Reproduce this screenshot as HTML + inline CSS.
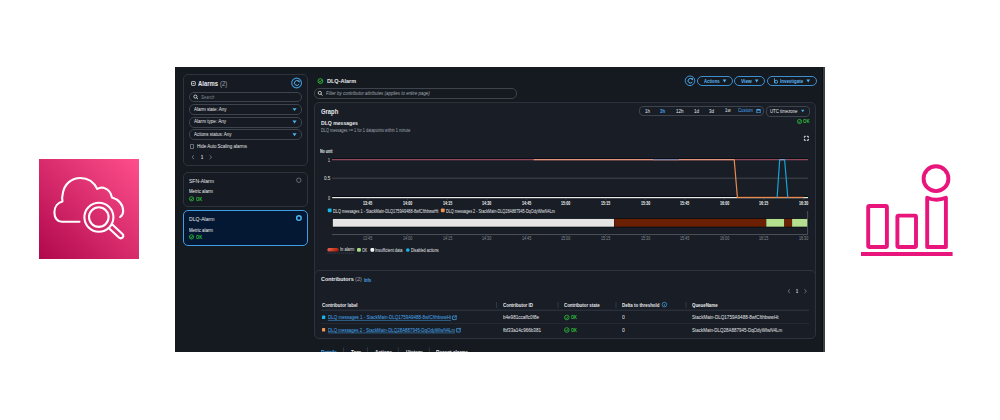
<!DOCTYPE html>
<html><head><meta charset="utf-8"><style>
html,body{margin:0;padding:0;width:1000px;height:420px;overflow:hidden;background:#fff;font-family:'Liberation Sans', sans-serif;}
.t{position:absolute;white-space:nowrap;line-height:10px;height:10px;transform-origin:0 0;}
.a{position:absolute;box-sizing:border-box;}
svg{position:absolute;overflow:visible;}
</style></head><body>
<!-- left AWS icon -->
<div class="a" style="left:39px;top:159px;width:100px;height:100px;background:linear-gradient(45deg,#B0084D 0%,#FF4F8B 100%);"></div>
<svg style="left:0;top:0" width="1000" height="420" viewBox="0 0 1000 420">
  <g fill="none" stroke="#fff" stroke-width="2.1" stroke-linecap="round" stroke-linejoin="round">
    <path d="M79.5,221.8 L62,221.8 C57.5,221.8 54.4,218 54.4,212.5 C54.4,206.5 58,202.5 62.5,201.5 C62,199.5 62,197 62.6,194.5 C64,183.5 72,178 80.5,178 C88,178 94,182.5 97.3,189 C99,187.8 101.3,187.3 103.5,187.8 C108,189 111,192.5 112,197.5 C118.5,199.3 123.2,204.5 123.2,211 C123.2,213.5 122.2,215.5 120.2,217"/>
    <circle cx="98.9" cy="217.2" r="14.5"/>
    <circle cx="98.8" cy="217.1" r="9.8"/>
    <path d="M109.2,228.4 L118.9,237.6 C120,238.6 121.6,238.6 122.6,237.5 C123.6,236.4 123.5,234.9 122.5,234 L112.6,224.8"/>
  </g>
</svg>
<!-- right pink icon -->
<svg style="left:0;top:0" width="1000" height="420" viewBox="0 0 1000 420">
  <g fill="none" stroke="#E8157C" stroke-width="3.9" stroke-linejoin="round">
    <rect x="868.2" y="206" width="18.7" height="41" rx="1.2"/>
    <rect x="897.4" y="215.6" width="18.6" height="31.4" rx="1.2"/>
    <path d="M927.2,247 L927.2,197.8 Q936.6,201.8 945.9,197.8 L945.9,247 Z"/>
    <circle cx="936" cy="178.7" r="12.4"/>
    <line x1="861" y1="254" x2="952.6" y2="254" stroke-width="4"/>
  </g>
</svg>

<!-- screenshot container -->
<div class="a" style="left:175px;top:67px;width:650px;height:285px;background:#151a21;"></div>
<div class="a" style="left:821.5px;top:67px;width:1.5px;height:285px;background:#0b1017;"></div>
<div class="a" style="left:823px;top:67px;width:2px;height:285px;background:#3c3f43;"></div>

<!-- left filter panel -->
<div class="a" style="left:183px;top:74px;width:125px;height:92px;border:1px solid #2e343e;border-radius:5px;background:#161b23;"></div>
<svg style="left:0;top:0" width="1000" height="420">
  <rect x="191.5" y="81.6" width="3.8" height="3.8" rx="0.6" fill="none" stroke="#e6e8eb" stroke-width="0.8"/>
  <line x1="192.5" y1="83.5" x2="194.3" y2="83.5" stroke="#e6e8eb" stroke-width="0.7"/>
  <circle cx="296.6" cy="83" r="4.9" fill="none" stroke="#3d97d9" stroke-width="1.1"/>
  <path d="M298.5,81.3 A2.4,2.4 0 1 0 298.9,84.2" fill="none" stroke="#5ab8f5" stroke-width="1"/>
  <path d="M297.3,80.4 L299.6,80.4 L299.6,82.7 Z" fill="#5ab8f5"/>
  <circle cx="195.4" cy="96.6" r="1.6" fill="none" stroke="#e6e8eb" stroke-width="0.8"/>
  <line x1="196.6" y1="97.8" x2="198" y2="99.2" stroke="#e6e8eb" stroke-width="0.8"/>
  <g fill="#48b4f5">
    <path d="M292.5,108.2 L296.6,108.2 L294.55,111.1 Z"/>
    <path d="M292.5,120.5 L296.6,120.5 L294.55,123.4 Z"/>
    <path d="M292.5,133.3 L296.6,133.3 L294.55,136.2 Z"/>
  </g>
  <g fill="none" stroke="#8a9099" stroke-width="0.7">
    <path d="M194,155.3 L192,157.2 L194,159.1"/>
    <path d="M209.6,155.3 L211.6,157.2 L209.6,159.1"/>
  </g>
</svg>
<div class="a" style="left:189px;top:91.8px;width:113px;height:10.6px;border:1px solid #3e444d;border-radius:5px;"></div>
<div class="a" style="left:189px;top:104px;width:113px;height:11px;border:1px solid #3e444d;border-radius:5px;"></div>
<div class="a" style="left:189px;top:116.5px;width:113px;height:11px;border:1px solid #3e444d;border-radius:5px;"></div>
<div class="a" style="left:189px;top:129px;width:113px;height:11.2px;border:1px solid #3e444d;border-radius:5px;"></div>
<div class="a" style="left:189.6px;top:144.4px;width:4.8px;height:4.8px;border:0.8px solid #6b7078;border-radius:0.8px;"></div>

<!-- SFN card -->
<div class="a" style="left:183px;top:172px;width:125px;height:35px;border:1px solid #2e343e;border-radius:5px;background:#161b23;"></div>
<!-- DLQ card selected -->
<div class="a" style="left:183px;top:209.8px;width:125px;height:36px;border:1.3px solid #3f9fe2;border-radius:5px;background:#051833;"></div>
<svg style="left:0;top:0" width="1000" height="420">
  <circle cx="298.8" cy="180.2" r="2.2" fill="none" stroke="#7a8089" stroke-width="0.8"/>
  <circle cx="298.9" cy="218.1" r="2.3" fill="#051833" stroke="#4dbaf7" stroke-width="1.4"/>
  <g fill="none" stroke="#2fbf3a" stroke-width="0.8">
    <circle cx="191.5" cy="198.8" r="2.1"/>
    <path d="M190.4,198.9 L191.3,199.8 L192.6,197.9"/>
    <circle cx="191.5" cy="236.9" r="2.1"/>
    <path d="M190.4,237 L191.3,237.9 L192.6,236"/>
  </g>
</svg>

<!-- main header -->
<svg style="left:0;top:0" width="1000" height="420">
  <g fill="none" stroke="#2fbf3a" stroke-width="0.9">
    <circle cx="320.4" cy="81.1" r="2.4"/>
    <path d="M319.2,81.2 L320.2,82.2 L321.6,80.1"/>
  </g>
  <circle cx="690" cy="80.8" r="4.8" fill="none" stroke="#3d97d9" stroke-width="1"/>
  <path d="M691.9,79.1 A2.3,2.3 0 1 0 692.3,82" fill="none" stroke="#5ab8f5" stroke-width="1"/>
  <path d="M690.7,78.2 L693,78.2 L693,80.5 Z" fill="#5ab8f5"/>
  <g fill="#48b4f5">
    <path d="M722.7,79.6 L726.4,79.6 L724.55,82.4 Z"/>
    <path d="M754.9,79.6 L758.5,79.6 L756.7,82.4 Z"/>
    <path d="M806.4,79.6 L810,79.6 L808.2,82.4 Z"/>
  </g>
  <g fill="none" stroke="#5ab8f5" stroke-width="0.8">
    <circle cx="776.2" cy="81.8" r="1.5"/>
    <line x1="774.5" y1="78.3" x2="774.5" y2="83.2"/>
  </g>
  <circle cx="319.8" cy="92.9" r="1.6" fill="none" stroke="#e6e8eb" stroke-width="0.8"/>
  <line x1="321" y1="94.1" x2="322.5" y2="95.6" stroke="#e6e8eb" stroke-width="0.8"/>
</svg>
<div class="a" style="left:697px;top:75.5px;width:36px;height:10.6px;border:1px solid #3d8fcf;border-radius:6px;"></div>
<div class="a" style="left:734.3px;top:75.5px;width:30.4px;height:10.6px;border:1px solid #3d8fcf;border-radius:6px;"></div>
<div class="a" style="left:767px;top:75.5px;width:50px;height:10.6px;border:1px solid #3d8fcf;border-radius:6px;"></div>
<div class="a" style="left:314px;top:88px;width:203px;height:10.8px;border:1px solid #3e444d;border-radius:5px;"></div>

<!-- graph panel -->
<div class="a" style="left:314px;top:101.5px;width:502px;height:176px;border:1px solid #2c323c;border-radius:5px;background:#181d26;"></div>
<div class="a" style="left:639px;top:106px;width:124.6px;height:10px;border:1px solid #3e444d;border-radius:4px;"></div>
<div class="a" style="left:765.5px;top:106px;width:44.2px;height:10.5px;border:1px solid #3e444d;border-radius:4px;"></div>
<svg style="left:0;top:0" width="1000" height="420">
  <rect x="756.4" y="108.9" width="4.2" height="4.2" fill="#48a9ef" rx="0.5"/>
  <rect x="757.1" y="110.5" width="2.8" height="1.9" fill="#1a2230"/>
  <path d="M801.1,109.8 L804.4,109.8 L802.75,112.2 Z" fill="#48b4f5"/>
  <g fill="none" stroke="#2fbf3a" stroke-width="0.8">
    <circle cx="799.5" cy="121.5" r="2.1"/>
    <path d="M798.4,121.6 L799.3,122.5 L800.6,120.6"/>
  </g>
  <g fill="none" stroke="#e6e8eb" stroke-width="1">
    <path d="M804.4,137.7 L804.4,136.3 L805.8,136.3"/>
    <path d="M806.9,136.3 L808.3,136.3 L808.3,137.7"/>
    <path d="M804.4,138.9 L804.4,140.3 L805.8,140.3"/>
    <path d="M806.9,140.3 L808.3,140.3 L808.3,138.9"/>
  </g>
  <!-- chart -->
  <line x1="332" y1="178.2" x2="808" y2="178.2" stroke="#4d5259" stroke-width="0.8"/>
  <line x1="332" y1="158.6" x2="808" y2="158.6" stroke="#060c12" stroke-width="0.9"/>
  <line x1="332" y1="159.6" x2="808" y2="159.6" stroke="#94495a" stroke-width="1.2"/>
  <line x1="533.8" y1="159.6" x2="734.3" y2="159.6" stroke="#e6937d" stroke-width="1.2"/>
  <line x1="653" y1="159.6" x2="679" y2="159.6" stroke="#7f81a0" stroke-width="1.2"/>
  <line x1="332" y1="196.4" x2="808" y2="196.4" stroke="#060c12" stroke-width="1"/>
  <line x1="332" y1="198.7" x2="808" y2="198.7" stroke="#0a1016" stroke-width="0.8"/>
  <line x1="332.2" y1="197.6" x2="808" y2="197.6" stroke="#e6e6e6" stroke-width="1.3"/>
  <polyline points="734.2,159.6 737.4,197.4 803.5,197.4" fill="none" stroke="#e9894f" stroke-width="1.2"/>
  <polyline points="777.1,197.5 779.7,159.6 784.6,159.6 787.8,197.5" fill="none" stroke="#14a6d8" stroke-width="1.2"/>
  <line x1="779.9" y1="159.6" x2="784.4" y2="159.6" stroke="#8f95c0" stroke-width="1.2"/>
  <!-- legend squares -->
  <rect x="327.8" y="208.4" width="3.8" height="3.8" rx="0.9" fill="#17b5e8"/>
  <rect x="440.9" y="208.4" width="3.8" height="3.8" rx="0.9" fill="#f0934e"/>
  <!-- status bar -->
  <rect x="332.2" y="218.2" width="476.3" height="9.2" fill="#070b11"/>
  <rect x="332.8" y="218.9" width="281.2" height="7.8" fill="#e4e4e4"/>
  <rect x="614.3" y="218.9" width="152" height="7.8" fill="#6b1f03"/>
  <rect x="766.3" y="218.9" width="18" height="7.8" fill="#b3df8e"/>
  <rect x="784.3" y="218.9" width="7.8" height="7.8" fill="#6b1f03"/>
  <rect x="792.1" y="218.9" width="15.8" height="7.8" fill="#b3df8e"/>
  <line x1="332" y1="234.5" x2="808" y2="234.5" stroke="#50555c" stroke-width="0.9"/>
  <line x1="807.6" y1="211" x2="807.6" y2="234.5" stroke="#50555c" stroke-width="0.9"/>
  <g stroke="#50555c" stroke-width="0.7"><line x1="368.00" y1="198.2" x2="368.00" y2="199.8"/><line x1="368.00" y1="234.5" x2="368.00" y2="236"/><line x1="407.59" y1="198.2" x2="407.59" y2="199.8"/><line x1="407.59" y1="234.5" x2="407.59" y2="236"/><line x1="447.18" y1="198.2" x2="447.18" y2="199.8"/><line x1="447.18" y1="234.5" x2="447.18" y2="236"/><line x1="486.77" y1="198.2" x2="486.77" y2="199.8"/><line x1="486.77" y1="234.5" x2="486.77" y2="236"/><line x1="526.36" y1="198.2" x2="526.36" y2="199.8"/><line x1="526.36" y1="234.5" x2="526.36" y2="236"/><line x1="565.95" y1="198.2" x2="565.95" y2="199.8"/><line x1="565.95" y1="234.5" x2="565.95" y2="236"/><line x1="605.54" y1="198.2" x2="605.54" y2="199.8"/><line x1="605.54" y1="234.5" x2="605.54" y2="236"/><line x1="645.13" y1="198.2" x2="645.13" y2="199.8"/><line x1="645.13" y1="234.5" x2="645.13" y2="236"/><line x1="684.72" y1="198.2" x2="684.72" y2="199.8"/><line x1="684.72" y1="234.5" x2="684.72" y2="236"/><line x1="724.31" y1="198.2" x2="724.31" y2="199.8"/><line x1="724.31" y1="234.5" x2="724.31" y2="236"/><line x1="763.90" y1="198.2" x2="763.90" y2="199.8"/><line x1="763.90" y1="234.5" x2="763.90" y2="236"/><line x1="803.49" y1="198.2" x2="803.49" y2="199.8"/><line x1="803.49" y1="234.5" x2="803.49" y2="236"/></g>
  <!-- legend row -->
  <defs><linearGradient id="rg" x1="0" y1="0" x2="1" y2="0.3"><stop offset="0" stop-color="#f26a50"/><stop offset="1" stop-color="#a91f0b"/></linearGradient></defs>
  <rect x="327.4" y="248.1" width="11.4" height="3.5" rx="1.6" fill="url(#rg)"/>
  <line x1="327.5" y1="253.1" x2="353.8" y2="253.1" stroke="#7a8088" stroke-width="0.6" stroke-dasharray="0.7,1.3"/>
  <rect x="357" y="248.1" width="3.9" height="3.7" rx="1.2" fill="#a6dd84"/>
  <rect x="370.5" y="248.1" width="3.7" height="3.7" rx="1.1" fill="#f4f4f4"/>
  <circle cx="407.8" cy="250" r="1.85" fill="#19b3ea"/>
</svg>

<!-- contributors panel -->
<div class="a" style="left:314px;top:270px;width:502px;height:68.8px;border:1px solid #2e343e;border-radius:5px;background:#181d26;"></div>
<svg style="left:0;top:0" width="1000" height="420">
  <g fill="none" stroke="#8a9099" stroke-width="0.7">
    <path d="M790,289.3 L788,291.2 L790,293.1"/>
    <path d="M804.4,289.3 L806.4,291.2 L804.4,293.1"/>
  </g>
  <g stroke="#3a4049" stroke-width="0.8">
    <line x1="496.6" y1="302" x2="496.6" y2="308"/>
    <line x1="558" y1="302" x2="558" y2="308"/>
    <line x1="616" y1="302" x2="616" y2="308"/>
    <line x1="686" y1="302" x2="686" y2="308"/>
  </g>
  <line x1="321" y1="310.2" x2="809" y2="310.2" stroke="#363c46" stroke-width="0.9"/>
  <line x1="321" y1="323.5" x2="809" y2="323.5" stroke="#2a3039" stroke-width="0.7"/>
  <circle cx="664.4" cy="304.6" r="2.3" fill="none" stroke="#48a9ef" stroke-width="0.7"/>
  <line x1="664.4" y1="304" x2="664.4" y2="306" stroke="#48a9ef" stroke-width="0.6"/>
  <rect x="322" y="315.5" width="3.2" height="3.6" rx="0.7" fill="#17b5e8"/>
  <rect x="322" y="328" width="3.2" height="3.6" rx="0.7" fill="#f0934e"/>
  <line x1="327.8" y1="320.4" x2="451" y2="320.4" stroke="#48a9ef" stroke-width="0.5"/>
  <line x1="327.8" y1="332.9" x2="455" y2="332.9" stroke="#48a9ef" stroke-width="0.5"/>
  <g fill="none" stroke="#48a9ef" stroke-width="0.7">
    <path d="M454.8,316 L452.6,316 L452.6,319.6 L456.2,319.6 L456.2,317.4"/>
    <path d="M454.4,317.8 L456.4,315.8 M455,315.8 L456.4,315.8 L456.4,317.2"/>
    <path d="M458.8,328.5 L456.6,328.5 L456.6,332.1 L460.2,332.1 L460.2,329.9"/>
    <path d="M458.4,330.3 L460.4,328.3 M459,328.3 L460.4,328.3 L460.4,329.7"/>
  </g>
  <g fill="none" stroke="#2fbf3a" stroke-width="0.8">
    <circle cx="566.8" cy="317.5" r="2.3"/>
    <path d="M565.6,317.6 L566.6,318.6 L568,316.6"/>
    <circle cx="566.8" cy="330" r="2.3"/>
    <path d="M565.6,330.1 L566.6,331.1 L568,329.1"/>
  </g>
  <g stroke="#3a4049" stroke-width="0.8">
    <line x1="343.6" y1="347.4" x2="343.6" y2="352"/>
    <line x1="367.4" y1="347.4" x2="367.4" y2="352"/>
    <line x1="398.3" y1="347.4" x2="398.3" y2="352"/>
    <line x1="429.3" y1="347.4" x2="429.3" y2="352"/>
  </g>
</svg>
<!-- white cover below screenshot bottom -->
<div class="a" style="left:175px;top:352px;width:650px;height:20px;background:#fff;z-index:5;"></div>

<div class="t" style="left:198.00px;top:79.34px;font-size:6.30px;font-weight:700;color:#e6e8eb;;transform:scale(0.9364,1.0000);">Alarms</div>
<div class="t" style="left:219.90px;top:78.94px;font-size:6.30px;font-weight:400;color:#a3a9b1;;transform:scale(0.9217,1.0000);">(2)</div>
<div class="t" style="left:201.30px;top:93.20px;font-size:4.50px;font-weight:400;color:#7d848c;font-style:italic;transform:scale(0.9393,1.0000);">Search</div>
<div class="t" style="left:193.90px;top:104.62px;font-size:4.60px;font-weight:400;color:#e6e8eb;;transform:scale(0.9715,1.0000);">Alarm state: Any</div>
<div class="t" style="left:193.90px;top:116.84px;font-size:4.60px;font-weight:400;color:#e6e8eb;;transform:scale(0.9978,1.0000);">Alarm type: Any</div>
<div class="t" style="left:193.90px;top:129.96px;font-size:4.60px;font-weight:400;color:#e6e8eb;;transform:scale(0.9662,1.0000);">Actions status: Any</div>
<div class="t" style="left:197.00px;top:142.18px;font-size:4.50px;font-weight:400;color:#e6e8eb;;transform:scale(0.9924,1.0000);">Hide Auto Scaling alarms</div>
<div class="t" style="left:200.90px;top:153.48px;font-size:4.60px;font-weight:700;color:#e6e8eb;;transform:scale(0.8195,1.0000);">1</div>
<div class="t" style="left:189.10px;top:175.88px;font-size:5.40px;font-weight:400;color:#e6e8eb;;transform:scale(0.9341,1.0000);">SFN-Alarm</div>
<div class="t" style="left:189.10px;top:186.96px;font-size:4.60px;font-weight:400;color:#f2f3f5;;transform:scale(0.9454,1.0000);">Metric alarm</div>
<div class="t" style="left:195.80px;top:195.24px;font-size:4.60px;font-weight:700;color:#2fbf3a;;transform:scale(0.8853,1.0000);">OK</div>
<div class="t" style="left:189.10px;top:214.22px;font-size:5.40px;font-weight:400;color:#e6e8eb;;transform:scale(0.9418,1.0000);">DLQ-Alarm</div>
<div class="t" style="left:189.10px;top:225.96px;font-size:4.60px;font-weight:400;color:#f2f3f5;;transform:scale(0.9454,1.0000);">Metric alarm</div>
<div class="t" style="left:195.80px;top:233.24px;font-size:4.60px;font-weight:700;color:#2fbf3a;;transform:scale(0.8853,1.0000);">OK</div>
<div class="t" style="left:326.70px;top:76.34px;font-size:6.00px;font-weight:700;color:#e6e8eb;;transform:scale(0.9188,1.0000);">DLQ-Alarm</div>
<div class="t" style="left:704.00px;top:76.50px;font-size:4.60px;font-weight:700;color:#5ab6f6;;transform:scale(0.9253,1.0000);">Actions</div>
<div class="t" style="left:741.10px;top:76.50px;font-size:4.60px;font-weight:700;color:#5ab6f6;;transform:scale(1.0394,1.0000);">View</div>
<div class="t" style="left:780.00px;top:76.50px;font-size:4.60px;font-weight:700;color:#5ab6f6;;transform:scale(0.9625,1.0000);">Investigate</div>
<div class="t" style="left:326.00px;top:89.40px;font-size:4.50px;font-weight:400;color:#a3a9b1;font-style:italic;transform:scale(0.9833,1.0000);">Filter by contributor attributes (applies to entire page)</div>
<div class="t" style="left:321.00px;top:106.66px;font-size:7.00px;font-weight:700;color:#e6e8eb;;transform:scale(0.8388,1.0000);">Graph</div>
<div class="t" style="left:644.90px;top:106.66px;font-size:4.50px;font-weight:400;color:#e6e8eb;;transform:scale(0.9969,1.0000);">1h</div>
<div class="t" style="left:660.20px;top:106.66px;font-size:4.50px;font-weight:700;color:#48a9ef;;transform:scale(0.9496,1.0000);">3h</div>
<div class="t" style="left:676.00px;top:106.66px;font-size:4.50px;font-weight:400;color:#e6e8eb;;transform:scale(1.0112,1.0000);">12h</div>
<div class="t" style="left:694.00px;top:106.66px;font-size:4.50px;font-weight:400;color:#e6e8eb;;transform:scale(0.9969,1.0000);">1d</div>
<div class="t" style="left:709.30px;top:106.66px;font-size:4.50px;font-weight:400;color:#e6e8eb;;transform:scale(0.9969,1.0000);">3d</div>
<div class="t" style="left:724.90px;top:106.46px;font-size:4.50px;font-weight:400;color:#e6e8eb;;transform:scale(0.9539,1.0000);">1w</div>
<div class="t" style="left:738.10px;top:106.46px;font-size:4.50px;font-weight:400;color:#48a9ef;;transform:scale(0.9603,1.0000);">Custom</div>
<div class="t" style="left:770.00px;top:107.14px;font-size:4.80px;font-weight:400;color:#e6e8eb;;transform:scale(0.8970,1.0000);">UTC timezone</div>
<div class="t" style="left:803.00px;top:117.24px;font-size:4.50px;font-weight:700;color:#2fbf3a;;transform:scale(0.9778,1.0000);">OK</div>
<div class="t" style="left:321.00px;top:118.22px;font-size:6.20px;font-weight:700;color:#e6e8eb;;transform:scale(0.8252,1.0000);">DLQ messages</div>
<div class="t" style="left:321.00px;top:125.62px;font-size:4.50px;font-weight:400;color:#a3a9b1;;transform:scale(0.8539,1.0000);">DLQ messages &gt;= 1 for 1 datapoints within 1 minute</div>
<div class="t" style="left:320.40px;top:147.26px;font-size:4.50px;font-weight:700;color:#e6e8eb;;transform:scale(0.8065,1.0000);">No unit</div>
<div class="t" style="left:328.00px;top:155.70px;font-size:4.50px;font-weight:400;color:#e6e8eb;;transform:scale(0.7553,1.0000);">1</div>
<div class="t" style="left:323.70px;top:174.02px;font-size:4.50px;font-weight:400;color:#e6e8eb;;transform:scale(1.0055,1.0000);">0.5</div>
<div class="t" style="left:328.00px;top:193.70px;font-size:4.50px;font-weight:400;color:#e6e8eb;;transform:scale(0.7950,1.0000);">0</div>
<div class="t" style="left:363.40px;top:199.36px;font-size:4.50px;font-weight:700;color:#f4f5f6;;transform:scale(0.7989,1.0000);">13:45</div>
<div class="t" style="left:363.40px;top:234.36px;font-size:4.50px;font-weight:400;color:#8c9198;;transform:scale(0.8166,1.0000);">13:45</div>
<div class="t" style="left:402.99px;top:199.36px;font-size:4.50px;font-weight:700;color:#f4f5f6;;transform:scale(0.7989,1.0000);">14:00</div>
<div class="t" style="left:402.99px;top:234.36px;font-size:4.50px;font-weight:400;color:#8c9198;;transform:scale(0.8166,1.0000);">14:00</div>
<div class="t" style="left:442.58px;top:199.36px;font-size:4.50px;font-weight:700;color:#f4f5f6;;transform:scale(0.7989,1.0000);">14:15</div>
<div class="t" style="left:442.58px;top:234.36px;font-size:4.50px;font-weight:400;color:#8c9198;;transform:scale(0.8166,1.0000);">14:15</div>
<div class="t" style="left:482.17px;top:199.36px;font-size:4.50px;font-weight:700;color:#f4f5f6;;transform:scale(0.7989,1.0000);">14:30</div>
<div class="t" style="left:482.17px;top:234.36px;font-size:4.50px;font-weight:400;color:#8c9198;;transform:scale(0.8166,1.0000);">14:30</div>
<div class="t" style="left:521.76px;top:199.36px;font-size:4.50px;font-weight:700;color:#f4f5f6;;transform:scale(0.7989,1.0000);">14:45</div>
<div class="t" style="left:521.76px;top:234.36px;font-size:4.50px;font-weight:400;color:#8c9198;;transform:scale(0.8166,1.0000);">14:45</div>
<div class="t" style="left:561.35px;top:199.36px;font-size:4.50px;font-weight:700;color:#f4f5f6;;transform:scale(0.7989,1.0000);">15:00</div>
<div class="t" style="left:561.35px;top:234.36px;font-size:4.50px;font-weight:400;color:#8c9198;;transform:scale(0.8166,1.0000);">15:00</div>
<div class="t" style="left:600.94px;top:199.36px;font-size:4.50px;font-weight:700;color:#f4f5f6;;transform:scale(0.7989,1.0000);">15:15</div>
<div class="t" style="left:600.94px;top:234.36px;font-size:4.50px;font-weight:400;color:#8c9198;;transform:scale(0.8166,1.0000);">15:15</div>
<div class="t" style="left:640.53px;top:199.36px;font-size:4.50px;font-weight:700;color:#f4f5f6;;transform:scale(0.7989,1.0000);">15:30</div>
<div class="t" style="left:640.53px;top:234.36px;font-size:4.50px;font-weight:400;color:#8c9198;;transform:scale(0.8166,1.0000);">15:30</div>
<div class="t" style="left:680.12px;top:199.36px;font-size:4.50px;font-weight:700;color:#f4f5f6;;transform:scale(0.7989,1.0000);">15:45</div>
<div class="t" style="left:680.12px;top:234.36px;font-size:4.50px;font-weight:400;color:#8c9198;;transform:scale(0.8166,1.0000);">15:45</div>
<div class="t" style="left:719.71px;top:199.36px;font-size:4.50px;font-weight:700;color:#f4f5f6;;transform:scale(0.7989,1.0000);">16:00</div>
<div class="t" style="left:719.71px;top:234.36px;font-size:4.50px;font-weight:400;color:#8c9198;;transform:scale(0.8166,1.0000);">16:00</div>
<div class="t" style="left:759.30px;top:199.36px;font-size:4.50px;font-weight:700;color:#f4f5f6;;transform:scale(0.7989,1.0000);">16:15</div>
<div class="t" style="left:759.30px;top:234.36px;font-size:4.50px;font-weight:400;color:#8c9198;;transform:scale(0.8166,1.0000);">16:15</div>
<div class="t" style="left:798.89px;top:199.36px;font-size:4.50px;font-weight:700;color:#f4f5f6;;transform:scale(0.7989,1.0000);">16:30</div>
<div class="t" style="left:798.89px;top:234.36px;font-size:4.50px;font-weight:400;color:#8c9198;;transform:scale(0.8166,1.0000);">16:30</div>
<div class="t" style="left:333.00px;top:206.70px;font-size:4.50px;font-weight:400;color:#e6e8eb;;transform:scale(0.8513,1.0000);">DLQ messages 1 - StackMain-DLQ1759A9488-8wfCfthbwwHt</div>
<div class="t" style="left:446.00px;top:206.70px;font-size:4.50px;font-weight:400;color:#e6e8eb;;transform:scale(0.8405,1.0000);">DLQ messages 2 - StackMain-DLQ28A887945-DqOdyWlwN4Lm</div>
<div class="t" style="left:339.90px;top:245.48px;font-size:4.50px;font-weight:400;color:#e6e8eb;;transform:scale(0.8853,1.0000);">In alarm</div>
<div class="t" style="left:362.20px;top:246.48px;font-size:4.50px;font-weight:400;color:#e6e8eb;;transform:scale(0.7981,1.0000);">OK</div>
<div class="t" style="left:375.30px;top:246.08px;font-size:4.50px;font-weight:400;color:#e6e8eb;;transform:scale(0.8743,1.0000);">Insufficient data</div>
<div class="t" style="left:411.20px;top:245.88px;font-size:4.50px;font-weight:400;color:#e6e8eb;;transform:scale(0.8386,1.0000);">Disabled actions</div>
<div class="t" style="left:321.10px;top:274.16px;font-size:5.90px;font-weight:700;color:#e6e8eb;;transform:scale(0.9167,1.0000);">Contributors</div>
<div class="t" style="left:355.20px;top:274.16px;font-size:5.90px;font-weight:400;color:#a3a9b1;;transform:scale(0.9579,1.0000);">(2)</div>
<div class="t" style="left:364.30px;top:275.66px;font-size:4.60px;font-weight:700;color:#48a9ef;;transform:scale(0.8549,1.0000);">Info</div>
<div class="t" style="left:796.00px;top:287.48px;font-size:4.60px;font-weight:700;color:#e6e8eb;;transform:scale(0.7805,1.0000);">1</div>
<div class="t" style="left:321.60px;top:299.94px;font-size:5.00px;font-weight:700;color:#e6e8eb;;transform:scale(0.8838,1.0000);">Contributor label</div>
<div class="t" style="left:503.00px;top:300.34px;font-size:5.00px;font-weight:700;color:#e6e8eb;;transform:scale(0.8852,1.0000);">Contributor ID</div>
<div class="t" style="left:564.40px;top:299.94px;font-size:5.00px;font-weight:700;color:#e6e8eb;;transform:scale(0.8777,1.0000);">Contributor state</div>
<div class="t" style="left:622.00px;top:299.72px;font-size:5.00px;font-weight:700;color:#e6e8eb;;transform:scale(0.8820,1.0000);">Delta to threshold</div>
<div class="t" style="left:691.80px;top:299.94px;font-size:5.00px;font-weight:700;color:#e6e8eb;;transform:scale(0.8771,1.0000);">QueueName</div>
<div class="t" style="left:327.80px;top:312.00px;font-size:5.20px;font-weight:400;color:#48a9ef;;transform:scale(0.8632,1.0000);">DLQ messages 1 - StackMain-DLQ1759A9488-8wfCfthbwwHt</div>
<div class="t" style="left:327.80px;top:325.12px;font-size:5.20px;font-weight:400;color:#48a9ef;;transform:scale(0.8517,1.0000);">DLQ messages 2 - StackMain-DLQ28A887945-DqOdyWlwN4Lm</div>
<div class="t" style="left:503.00px;top:311.66px;font-size:5.20px;font-weight:400;color:#e6e8eb;;transform:scale(0.8807,1.0000);">b4e981ccaffc0f8e</div>
<div class="t" style="left:503.00px;top:324.78px;font-size:5.20px;font-weight:400;color:#e6e8eb;;transform:scale(0.8840,1.0000);">fbf33a14c966b381</div>
<div class="t" style="left:571.00px;top:311.66px;font-size:5.20px;font-weight:700;color:#2fbf3a;;transform:scale(0.7711,1.0000);">OK</div>
<div class="t" style="left:571.00px;top:324.78px;font-size:5.20px;font-weight:700;color:#2fbf3a;;transform:scale(0.7711,1.0000);">OK</div>
<div class="t" style="left:622.40px;top:311.66px;font-size:5.20px;font-weight:400;color:#e6e8eb;;transform:scale(0.9686,1.0000);">0</div>
<div class="t" style="left:622.40px;top:324.78px;font-size:5.20px;font-weight:400;color:#e6e8eb;;transform:scale(0.9686,1.0000);">0</div>
<div class="t" style="left:691.80px;top:311.66px;font-size:5.20px;font-weight:400;color:#e6e8eb;;transform:scale(0.8824,1.0000);">StackMain-DLQ1759A9488-8wfCfthbwwHt</div>
<div class="t" style="left:691.80px;top:324.78px;font-size:5.20px;font-weight:400;color:#e6e8eb;;transform:scale(0.8617,1.0000);">StackMain-DLQ28A887945-DqOdyWlwN4Lm</div>
<div class="t" style="left:321.00px;top:347.12px;font-size:5.00px;font-weight:700;color:#48a9ef;;transform:scale(0.9813,1.0000);">Details</div>
<div class="t" style="left:350.70px;top:347.12px;font-size:5.00px;font-weight:700;color:#e6e8eb;;transform:scale(0.9105,1.0000);">Tags</div>
<div class="t" style="left:374.50px;top:346.72px;font-size:5.00px;font-weight:700;color:#e6e8eb;;transform:scale(0.9267,1.0000);">Actions</div>
<div class="t" style="left:406.00px;top:346.72px;font-size:5.00px;font-weight:700;color:#e6e8eb;;transform:scale(0.9574,1.0000);">History</div>
<div class="t" style="left:436.00px;top:346.72px;font-size:5.00px;font-weight:700;color:#e6e8eb;;transform:scale(0.9360,1.0000);">Recent alarms</div>
</body></html>
